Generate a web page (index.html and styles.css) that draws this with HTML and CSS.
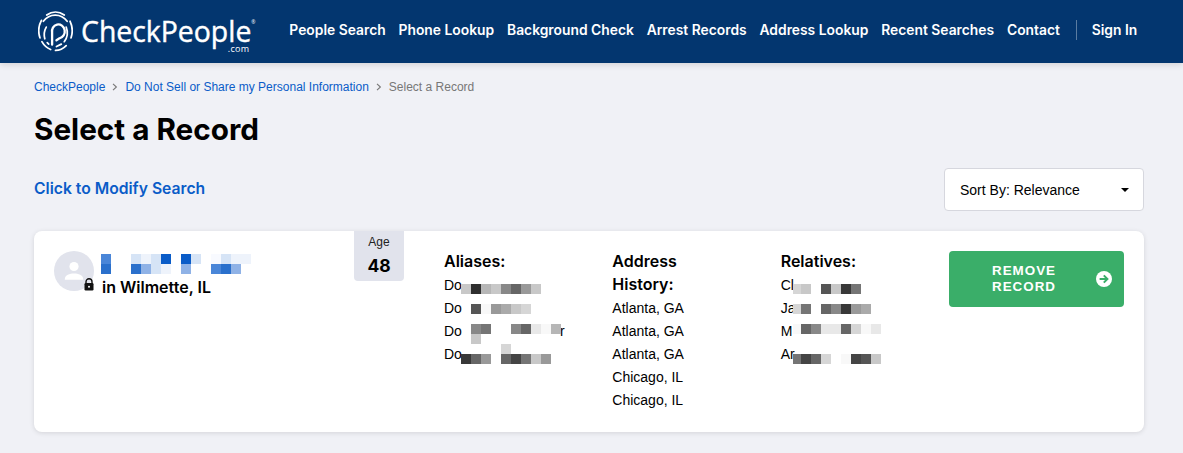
FILE: index.html
```html
<!DOCTYPE html>
<html lang="en">
<head>
  <meta charset="UTF-8">
  <title>Select a Record - CheckPeople</title>
  <link rel="stylesheet" href="styles.css">
</head>
<body>
  <header class="site-header">
    <a class="logo" href="#">
      <svg class="logo-mark" width="35" height="42" viewBox="0 0 36 42" fill="none" stroke="#fff" stroke-width="1.8" stroke-linecap="round">
        <path d="M9 4.5 A17 20 0 0 1 27 4.5" />
        <path d="M5.5 11 A16 18 0 0 1 30 11" />
        <path d="M3.5 10 A17 20 0 0 0 2 28" />
        <path d="M33 11 A17 20 0 0 1 34 28" />
        <path d="M4 32 A17 20 0 0 0 13 40" />
        <path d="M18 41 A17 20 0 0 0 29 36" />
        <path d="M8.5 17 A12 14 0 0 0 7 29" />
        <path d="M29 17 A12 14 0 0 1 27 32" />
        <path d="M9.5 33 L11 34.5" />
        <path d="M14.5 35 V23 A6.6 7.2 0 1 1 22 28.5 L19 30.5" stroke-width="2.4" />
        <path d="M19 37 L24 34.5" />
      </svg>
      <span class="logo-text">CheckPeople<sup class="logo-reg">®</sup><small class="logo-com">.com</small></span>
    </a>
    <nav class="main-nav">
      <a href="#">People Search</a>
      <a href="#">Phone Lookup</a>
      <a href="#">Background Check</a>
      <a href="#">Arrest Records</a>
      <a href="#">Address Lookup</a>
      <a href="#">Recent Searches</a>
      <a href="#">Contact</a>
      <a class="sign-in" href="#">Sign In</a>
    </nav>
  </header>

  <main class="container">
    <div class="breadcrumb">
      <a href="#">CheckPeople</a>
      <svg class="crumb-sep" width="6" height="8" viewBox="0 0 6 8" fill="none" stroke="#777" stroke-width="1.1"><path d="M1 .8 4.4 4 1 7.2" /></svg>
      <a href="#">Do Not Sell or Share my Personal Information</a>
      <svg class="crumb-sep" width="6" height="8" viewBox="0 0 6 8" fill="none" stroke="#777" stroke-width="1.1"><path d="M1 .8 4.4 4 1 7.2" /></svg>
      <span>Select a Record</span>
    </div>

    <h1>Select a Record</h1>

    <div class="toolbar">
      <a class="modify" href="#">Click to Modify Search</a>
      <div class="sort-box">
        <span>Sort By: Relevance</span>
        <i class="caret"></i>
      </div>
    </div>

    <section class="card">
      <div class="person">
        <div class="avatar">
          <svg width="24" height="24" viewBox="0 0 24 24" fill="#fff"><circle cx="12" cy="7.5" r="4.6" /><path d="M2.8 20c0-3.6 5-5.4 9.2-5.4s9.2 1.8 9.2 5.4v.8H2.8z" /></svg>
          <svg class="lock" width="12" height="13" viewBox="0 0 12 13"><path d="M3 5.5V3.8a3 3 0 0 1 6 0v1.7" fill="none" stroke="#111" stroke-width="1.4" /><rect x="1.5" y="5" width="9" height="7.5" rx="1.2" fill="#111" /><circle cx="6" cy="8.7" r="1" fill="#fff" /></svg>
        </div>
        <div class="person-info">
          <div class="mosaic mosaic-name">
            <span class="b3"></span><span></span><span></span><span class="b5"></span><span class="b6"></span><span class="b5"></span><span class="b1"></span><span></span><span class="b1"></span><span class="b5"></span><span></span><span class="b7"></span><span class="b5"></span><span class="b6"></span><span class="b6"></span>
            <span class="b2"></span><span></span><span></span><span class="b2"></span><span class="b4"></span><span class="b5"></span><span class="b6"></span><span></span><span class="b4"></span><span></span><span></span><span class="b3"></span><span class="b2"></span><span class="b4"></span><span></span>
          </div>
          <div class="location">in Wilmette, IL</div>
        </div>
      </div>

      <div class="age">
        <span class="age-label">Age</span>
        <span class="age-value">48</span>
      </div>

      <div class="details">
        <div class="col">
          <h3>Aliases:</h3>
          <div class="rows">
            <div>Do</div>
            <div>Do</div>
            <div>Do<span class="tail">r</span></div>
            <div>Do</div>
            <div class="mosaic mosaic-alias">
              <span class="kc"></span><span class="k2"></span><span class="kb"></span><span class="kc"></span><span class="k8"></span><span class="k6"></span><span class="k9"></span><span class="kc"></span><span></span><span></span>
              <span class="blank"></span>
              <span></span><span class="k5"></span><span class="kf"></span><span class="k9"></span><span class="ka"></span><span class="kc"></span><span class="kd"></span><span></span><span></span><span></span>
              <span class="blank"></span>
              <span></span><span class="k8"></span><span class="k7"></span><span></span><span></span><span class="k8"></span><span class="k6"></span><span class="ke"></span><span class="kf"></span><span class="kb"></span>
              <span></span><span class="kc"></span><span></span><span></span><span></span><span></span><span></span><span></span><span></span><span></span>
              <span></span><span></span><span></span><span></span><span class="kd"></span><span></span><span></span><span></span><span></span><span></span>
              <span class="k3"></span><span class="k6"></span><span class="k9"></span><span></span><span class="k6"></span><span class="k4"></span><span class="k7"></span><span class="kc"></span><span class="k9"></span><span></span>
            </div>
          </div>
        </div>

        <div class="col">
          <h3 class="narrow">Address History:</h3>
          <div class="rows">
            <div>Atlanta, GA</div>
            <div>Atlanta, GA</div>
            <div>Atlanta, GA</div>
            <div>Chicago, IL</div>
            <div>Chicago, IL</div>
          </div>
        </div>

        <div class="col">
          <h3>Relatives:</h3>
          <div class="rows">
            <div>Cl</div>
            <div>Ja</div>
            <div>M</div>
            <div>Ar</div>
            <div class="mosaic mosaic-rel">
              <span class="kd"></span><span class="kc"></span><span></span><span class="k5"></span><span class="kc"></span><span class="k3"></span><span class="k7"></span><span></span><span></span>
              <span class="blank"></span>
              <span class="kd"></span><span class="k7"></span><span></span><span class="k6"></span><span class="k8"></span><span class="k3"></span><span class="k9"></span><span class="ka"></span><span></span>
              <span class="blank"></span>
              <span class="kf"></span><span class="k6"></span><span class="k8"></span><span class="ke"></span><span class="ke"></span><span class="k6"></span><span class="kd"></span><span class="kf"></span><span class="ke"></span>
              <span class="blank"></span>
              <span class="blank"></span>
              <span class="k7"></span><span class="k4"></span><span class="k6"></span><span class="kd"></span><span></span><span class="kf"></span><span class="k4"></span><span class="k5"></span><span class="kc"></span>
            </div>
          </div>
        </div>
      </div>

      <a class="remove-btn" href="#">
        <span class="remove-label">REMOVE RECORD</span>
        <svg width="16" height="16" viewBox="0 0 16 16"><circle cx="8" cy="8" r="8" fill="#fff" /><path d="M3.6 8h7.4M7.8 4.4 11.4 8l-3.6 3.6" fill="none" stroke="#3aae69" stroke-width="2" /></svg>
      </a>
    </section>
  </main>
</body>
</html>
```

FILE: styles.css
```css
:root {
  --navy: #03366f;
  --page: #f0f1f6;
  --link: #0a5cc8;
  --green: #3aae69;
  --chip: #e1e3ec;
}

body {
  margin: 0;
  background: var(--page);
  color: #000;
  font-family: "Liberation Sans", Arial, sans-serif;
}

a {
  color: inherit;
  text-decoration: none;
}

/* header */
.site-header {
  height: 63px;
  display: flex;
  align-items: center;
  padding-left: 38px;
  background: var(--navy);
  box-shadow: 0 2px 6px rgba(0, 0, 0, 0.12);
  color: #fff;
}

.logo {
  display: flex;
  align-items: center;
  gap: 8px;
  margin-top: -2px;
}

.logo-text {
  position: relative;
  font-family: "Open Sans", sans-serif;
  font-size: 28.4px;
  -webkit-text-stroke: 0.4px #fff;
  line-height: 34px;
}

.logo-reg {
  position: absolute;
  top: 3px;
  left: 100%;
  font-size: 5px;
  line-height: 10px;
  -webkit-text-stroke: 0;
}

.logo-com {
  position: absolute;
  right: 2px;
  bottom: -6px;
  font-size: 9px;
  letter-spacing: 0.3px;
  line-height: 10px;
  -webkit-text-stroke: 0;
}

.main-nav {
  display: flex;
  align-items: center;
  gap: 12.8px;
  margin-left: 38px;
  margin-top: -3px;
  font-family: Inter, sans-serif;
  font-size: 13.85px;
  font-weight: 600;
}

.sign-in {
  margin-left: 3px;
  padding-left: 15px;
  line-height: 20px;
  border-left: 1px solid rgba(255, 255, 255, 0.35);
}

/* page */
.container {
  width: 1110px;
  margin: 0 0 20px 34px;
}

.breadcrumb {
  display: flex;
  align-items: center;
  gap: 7px;
  padding-top: 17px;
  font-size: 12px;
  line-height: 14px;
  color: #777;
}

.breadcrumb a {
  color: var(--link);
}

h1 {
  margin: 17px 0 0;
  font-family: Inter, sans-serif;
  font-size: 29.7px;
  font-weight: 700;
  line-height: 36px;
}

.toolbar {
  display: flex;
  align-items: center;
  justify-content: space-between;
  margin-top: 21px;
}

.modify {
  margin-bottom: 2px;
  color: var(--link);
  font-family: Inter, sans-serif;
  font-size: 15.7px;
  font-weight: 600;
}

.sort-box {
  box-sizing: border-box;
  width: 200px;
  height: 43px;
  display: flex;
  align-items: center;
  justify-content: space-between;
  padding: 0 14px 0 15px;
  background: #fff;
  border: 1px solid #d6d7de;
  border-radius: 4px;
  font-size: 14px;
}

.caret {
  width: 0;
  height: 0;
  border: 4px solid transparent;
  border-top-color: #000;
  border-bottom: 0;
}

/* record card */
.card {
  display: flex;
  align-items: flex-start;
  height: 201px;
  box-sizing: border-box;
  margin-top: 20px;
  padding: 0 20px;
  background: #fff;
  border-radius: 8px;
  box-shadow: 0 1px 5px rgba(0, 0, 0, 0.12);
}

.person {
  width: 300px;
  display: flex;
  padding-top: 20px;
}

.avatar {
  position: relative;
  width: 40px;
  height: 40px;
  display: flex;
  align-items: center;
  justify-content: center;
  border-radius: 50%;
  background: var(--chip);
}

.lock {
  position: absolute;
  left: 29px;
  top: 27px;
}

.person-info {
  margin-left: 7px;
  padding-top: 3px;
}

.location {
  margin: 3px 0 0 1px;
  font-family: Inter, sans-serif;
  font-size: 16px;
  font-weight: 600;
  line-height: 20px;
}

.age {
  width: 50px;
  height: 50px;
  display: flex;
  flex-direction: column;
  align-items: center;
  background: var(--chip);
  border-radius: 0 0 4px 4px;
}

.age-label {
  margin-top: 4px;
  font-size: 12px;
  line-height: 14px;
  color: #222;
}

.age-value {
  margin-top: 6px;
  font-family: Inter, sans-serif;
  font-size: 17.5px;
  font-weight: 700;
  line-height: 22px;
}

.details {
  flex: 1;
  display: flex;
  margin-left: 40px;
  padding-top: 19px;
}

.col {
  flex: 1;
}

h3 {
  margin: 0;
  font-family: Inter, sans-serif;
  font-size: 16px;
  font-weight: 600;
  line-height: 23px;
}

.narrow {
  width: 90px;
}

.rows {
  position: relative;
  margin-top: 1px;
  font-size: 14px;
  line-height: 23px;
}

.tail {
  margin-left: 98px;
}

/* blurred out names */
.mosaic {
  display: grid;
  grid-auto-rows: 10px;
}

.mosaic-name {
  grid-template-columns: repeat(15, 10px);
}

.mosaic-alias {
  position: absolute;
  left: 17px;
  top: 10px;
  grid-template-columns: repeat(10, 10px);
}

.mosaic-rel {
  position: absolute;
  left: 12px;
  top: 10px;
  grid-template-columns: 8px repeat(8, 10px);
}

.blank {
  grid-column: 1 / -1;
}

.k2 { background: #2e2e2e; }
.k3 { background: #383838; }
.k4 { background: #444; }
.k5 { background: #555; }
.k6 { background: #666; }
.k7 { background: #757575; }
.k8 { background: #888; }
.k9 { background: #999; }
.ka { background: #aaa; }
.kb { background: #b6b6b6; }
.kc { background: #c8c8c8; }
.kd { background: #d6d6d6; }
.ke { background: #e8e8e8; }
.kf { background: #f8f8f8; }

.b1 { background: #0a5cc8; }
.b2 { background: #2a70cc; }
.b3 { background: #4a86d8; }
.b4 { background: #8fb2e6; }
.b5 { background: #d6e4f6; }
.b6 { background: #eef3fb; }
.b7 { background: #f8faff; }

.remove-btn {
  width: 175px;
  height: 56px;
  box-sizing: border-box;
  display: flex;
  align-items: center;
  margin-top: 20px;
  padding: 0 12px 0 40px;
  justify-content: space-between;
  background: var(--green);
  border-radius: 4px;
  color: #fff;
  font-size: 13.4px;
  font-weight: 700;
  line-height: 16px;
  letter-spacing: 1px;
}

.remove-label {
  width: 70px;
  text-align: center;
}
```
